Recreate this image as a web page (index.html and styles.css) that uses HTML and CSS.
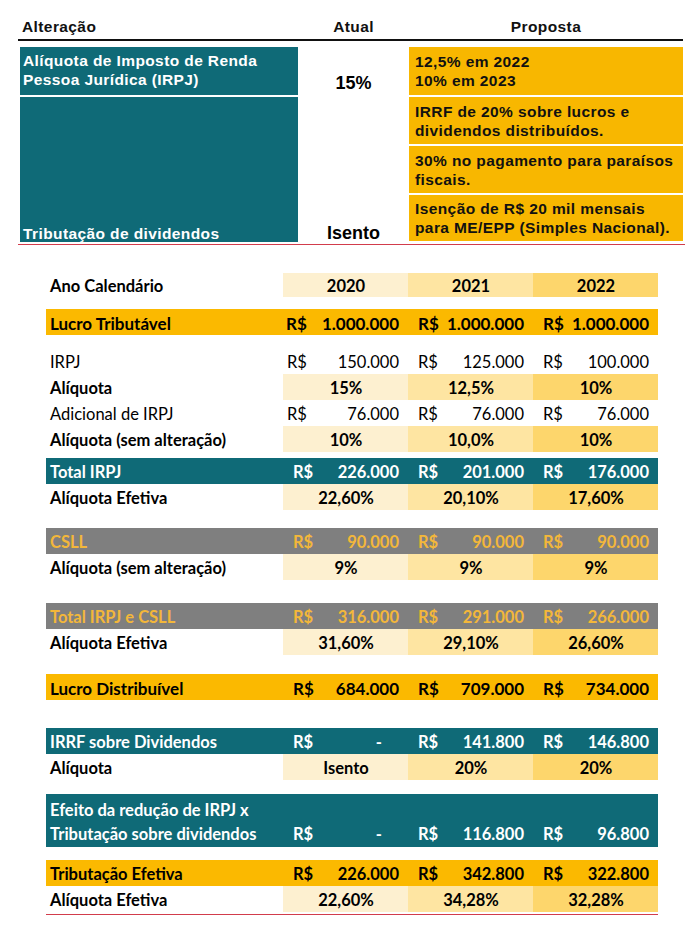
FILE: index.html
```html
<!DOCTYPE html>
<html lang="pt-BR">
<head>
<meta charset="utf-8">
<title>Reforma tributária – IRPJ e dividendos</title>
<link rel="stylesheet" href="styles.css">
</head>
<body>
<div class="page">
  <section class="reform">
    <div class="rf-head">
      <div class="rf-h rf-h-left">Alteração</div>
      <div class="rf-h">Atual</div>
      <div class="rf-h">Proposta</div>
    </div>
    <div class="rf-grid">
      <div class="rf-topic rf-topic-1">Alíquota de Imposto de Renda<br>Pessoa Jurídica (IRPJ)</div>
      <div class="rf-current rf-current-1">15%</div>
      <div class="rf-prop r1">12,5% em 2022<br>10% em 2023</div>
      <div class="rf-topic rf-topic-2">Tributação de dividendos</div>
      <div class="rf-current rf-current-2">Isento</div>
      <div class="rf-prop r2">IRRF de 20% sobre lucros e<br>dividendos distribuídos.</div>
      <div class="rf-prop r3">30% no pagamento para paraísos<br>fiscais.</div>
      <div class="rf-prop r4">Isenção de R$ 20 mil mensais<br>para ME/EPP (Simples Nacional).</div>
    </div>
  </section>

  <section class="calc">
    <div class="row row-years">
      <div class="lbl">Ano Calendário</div>
      <div class="cell ctr t1">2020</div>
      <div class="cell ctr t2">2021</div>
      <div class="cell ctr t3">2022</div>
    </div>

    <div class="row band-orange big sp-12">
      <div class="lbl">Lucro Tributável</div>
      <div class="cell money c1"><span>R$</span><span>1.000.000</span></div>
      <div class="cell money"><span>R$</span><span>1.000.000</span></div>
      <div class="cell money"><span>R$</span><span>1.000.000</span></div>
    </div>

    <div class="row plain sp-13">
      <div class="lbl">IRPJ</div>
      <div class="cell money c1"><span>R$</span><span>150.000</span></div>
      <div class="cell money"><span>R$</span><span>125.000</span></div>
      <div class="cell money"><span>R$</span><span>100.000</span></div>
    </div>
    <div class="row">
      <div class="lbl">Alíquota</div>
      <div class="cell ctr t1">15%</div>
      <div class="cell ctr t2">12,5%</div>
      <div class="cell ctr t3">10%</div>
    </div>
    <div class="row plain">
      <div class="lbl">Adicional de IRPJ</div>
      <div class="cell money c1"><span>R$</span><span>76.000</span></div>
      <div class="cell money"><span>R$</span><span>76.000</span></div>
      <div class="cell money"><span>R$</span><span>76.000</span></div>
    </div>
    <div class="row">
      <div class="lbl">Alíquota (sem alteração)</div>
      <div class="cell ctr t1">10%</div>
      <div class="cell ctr t2">10,0%</div>
      <div class="cell ctr t3">10%</div>
    </div>

    <div class="row band-teal sp-6">
      <div class="lbl">Total IRPJ</div>
      <div class="cell money"><span>R$</span><span>226.000</span></div>
      <div class="cell money"><span>R$</span><span>201.000</span></div>
      <div class="cell money"><span>R$</span><span>176.000</span></div>
    </div>
    <div class="row">
      <div class="lbl">Alíquota Efetiva</div>
      <div class="cell ctr t1">22,60%</div>
      <div class="cell ctr t2">20,10%</div>
      <div class="cell ctr t3">17,60%</div>
    </div>

    <div class="row band-gray sp-18">
      <div class="lbl">CSLL</div>
      <div class="cell money"><span>R$</span><span>90.000</span></div>
      <div class="cell money"><span>R$</span><span>90.000</span></div>
      <div class="cell money"><span>R$</span><span>90.000</span></div>
    </div>
    <div class="row">
      <div class="lbl">Alíquota (sem alteração)</div>
      <div class="cell ctr t1">9%</div>
      <div class="cell ctr t2">9%</div>
      <div class="cell ctr t3">9%</div>
    </div>

    <div class="row band-gray sp-23">
      <div class="lbl">Total IRPJ e CSLL</div>
      <div class="cell money"><span>R$</span><span>316.000</span></div>
      <div class="cell money"><span>R$</span><span>291.000</span></div>
      <div class="cell money"><span>R$</span><span>266.000</span></div>
    </div>
    <div class="row">
      <div class="lbl">Alíquota Efetiva</div>
      <div class="cell ctr t1">31,60%</div>
      <div class="cell ctr t2">29,10%</div>
      <div class="cell ctr t3">26,60%</div>
    </div>

    <div class="row band-orange big sp-19">
      <div class="lbl">Lucro Distribuível</div>
      <div class="cell money"><span>R$</span><span>684.000</span></div>
      <div class="cell money"><span>R$</span><span>709.000</span></div>
      <div class="cell money"><span>R$</span><span>734.000</span></div>
    </div>

    <div class="row band-teal sp-28">
      <div class="lbl">IRRF sobre Dividendos</div>
      <div class="cell money"><span>R$</span><span class="dash">-</span></div>
      <div class="cell money"><span>R$</span><span>141.800</span></div>
      <div class="cell money"><span>R$</span><span>146.800</span></div>
    </div>
    <div class="row">
      <div class="lbl">Alíquota</div>
      <div class="cell ctr t1">Isento</div>
      <div class="cell ctr t2">20%</div>
      <div class="cell ctr t3">20%</div>
    </div>

    <div class="row row-tall band-teal sp-14">
      <div class="lbl">Efeito da redução de IRPJ x<br>Tributação sobre dividendos</div>
      <div class="cell money"><span>R$</span><span class="dash">-</span></div>
      <div class="cell money"><span>R$</span><span>116.800</span></div>
      <div class="cell money"><span>R$</span><span>96.800</span></div>
    </div>

    <div class="row band-orange sp-13">
      <div class="lbl">Tributação Efetiva</div>
      <div class="cell money"><span>R$</span><span>226.000</span></div>
      <div class="cell money"><span>R$</span><span>342.800</span></div>
      <div class="cell money"><span>R$</span><span>322.800</span></div>
    </div>
    <div class="row">
      <div class="lbl">Alíquota Efetiva</div>
      <div class="cell ctr t1">22,60%</div>
      <div class="cell ctr t2">34,28%</div>
      <div class="cell ctr t3">32,28%</div>
    </div>
  </section>
</div>
</body>
</html>
```

FILE: styles.css
```css
* { box-sizing: border-box; }

html, body {
  margin: 0;
  padding: 0;
  background: #ffffff;
}

.page {
  width: 695px;
  padding-top: 14px;
}

/* ---------- top comparison table ---------- */
.reform {
  margin-left: 18px;
  width: 667px;
  padding-bottom: 3px;
  border-bottom: 1px solid #d23c4c;
  font-family: "Liberation Sans", Arial, sans-serif;
  font-weight: 700;
  letter-spacing: 0.4px;
}

.rf-head {
  display: grid;
  grid-template-columns: 280px 111px 274px;
  width: 665px;
  height: 27px;
  border-bottom: 2px solid #111;
}

.rf-h {
  font-size: 15.5px;
  line-height: 25px;
  text-align: center;
  color: #111;
}

.rf-h-left {
  text-align: left;
  padding-left: 4px;
}

.rf-grid {
  display: grid;
  grid-template-columns: 280px 111px 274px;
  grid-template-rows: 48px 47px 47px 46px;
  row-gap: 2px;
  margin-top: 6px;
}

.rf-topic {
  margin-left: 2px;
  background: #0f6a77;
  color: #ffffff;
  font-size: 15.5px;
  line-height: 19px;
  padding-left: 3px;
}

.rf-topic-1 {
  grid-column: 1;
  grid-row: 1;
  padding-top: 4px;
}

.rf-topic-2 {
  grid-column: 1;
  grid-row: 2 / 5;
  display: flex;
  align-items: flex-end;
  line-height: 17px;
  padding-bottom: 0;
  margin-bottom: -1px;
}

.rf-current {
  grid-column: 2;
  font-size: 18px;
  line-height: 16px;
  color: #000;
  text-align: center;
  letter-spacing: 0;
  display: flex;
  justify-content: center;
}

.rf-current-1 {
  grid-row: 1;
  align-items: flex-end;
  padding-bottom: 4px;
}

.rf-current-2 {
  grid-row: 2 / 5;
  align-items: flex-end;
  padding-bottom: 0;
}

.rf-prop {
  grid-column: 3;
  background: #f8b700;
  color: #111;
  font-size: 15.5px;
  line-height: 19px;
  padding-left: 6px;
  display: flex;
  align-items: center;
}

.r1 { grid-row: 1; }
.r2 { grid-row: 2; }
.r3 { grid-row: 3; }
.r4 { grid-row: 4; }

/* ---------- bottom calculation table ---------- */
.calc {
  margin: 28px 0 0 46px;
  width: 612px;
  padding-bottom: 2px;
  border-bottom: 1px solid #d23c4c;
  font-family: Lato, "Noto Sans", sans-serif;
  font-size: 16.5px;
  color: #000;
}

.row {
  display: grid;
  grid-template-columns: 237px 125px 125px 125px;
  height: 26px;
}

.row-years { height: 24px; }
.row-tall { height: 53px; }

.lbl {
  display: flex;
  align-items: center;
  padding-left: 4px;
  padding-top: 2px;
  font-weight: 700;
  white-space: nowrap;
}

.cell {
  display: flex;
  align-items: center;
  padding: 2px 9px 0 10px;
  white-space: nowrap;
}

.money { justify-content: space-between; font-weight: 700; }
.ctr { justify-content: center; font-weight: 700; }

.dash { padding-right: 17px; }

.t1 { background: #fdf0d0; }
.t2 { background: #fee5a2; }
.t3 { background: #fdd66c; }

.plain .lbl,
.plain .cell { font-weight: 400; }
.plain .c1 { padding-left: 4px; }

.band-orange { background: #fbb900; }
.band-teal { background: #0f6a77; color: #ffffff; }
.band-gray { background: #7f7f7f; color: #f3b73a; }

.big { font-size: 17px; }
.big .c1 { padding-left: 3px; }

.row-tall .lbl {
  align-items: flex-start;
  line-height: 24px;
  padding-top: 4px;
}

.row-tall .cell {
  align-items: flex-end;
  padding-top: 0;
  padding-bottom: 1px;
  line-height: 24px;
}

.sp-6 { margin-top: 6px; }
.sp-12 { margin-top: 12px; }
.sp-13 { margin-top: 13px; }
.sp-14 { margin-top: 14px; }
.sp-18 { margin-top: 18px; }
.sp-19 { margin-top: 19px; }
.sp-23 { margin-top: 23px; }
.sp-28 { margin-top: 28px; }
```
